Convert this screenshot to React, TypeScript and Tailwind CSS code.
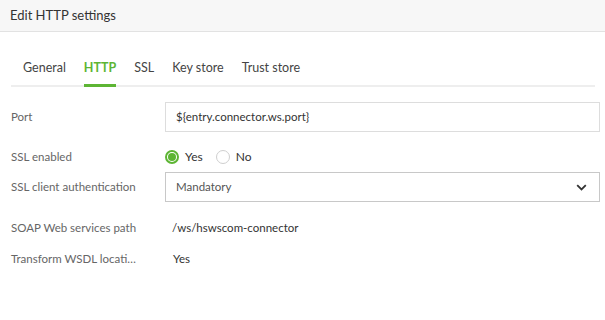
import React from 'react';

const font = { fontFamily: 'Lato, "Noto Sans", sans-serif' };

const tabs = ['General', 'HTTP', 'SSL', 'Key store', 'Trust store'];

const Radio = ({ checked, label }: { checked: boolean; label: string }) => (
  <label className="flex items-center gap-[6px]">
    <span
      className={
        checked
          ? 'w-[14px] h-[14px] rounded-full border-2 border-[#5db534] flex items-center justify-center'
          : 'w-[14px] h-[14px] rounded-full border border-[#cfcfcf] bg-white'
      }
    >
      {checked && <span className="w-[8px] h-[8px] rounded-full bg-[#5db534]" />}
    </span>
    <span className="text-[12px] text-[#333]">{label}</span>
  </label>
);

const App: React.FC = () => {
  return (
    <div className="w-[605px] h-[320px] bg-white overflow-hidden" style={font}>
      <div className="h-[32px] bg-[#f7f7f7] border-b border-[#e2e2e2] px-[10px] flex items-center">
        <h1 className="text-[13px] text-[#333] leading-none">Edit HTTP settings</h1>
      </div>

      <div className="pl-[11px] pr-[10px] pt-[27px]">
        <div className="flex gap-[18px] pl-[12px] border-b-2 border-[#eeeeee]">
          {tabs.map((t) => (
            <div
              key={t}
              className={
                t === 'HTTP'
                  ? 'pb-[7px] text-[12.5px] leading-[18px] font-bold text-[#5db534] border-b-[3px] border-[#5db534] -mb-[2px]'
                  : 'pb-[7px] text-[12.5px] leading-[18px] text-[#444] border-b-[3px] border-transparent -mb-[2px]'
              }
            >
              {t}
            </div>
          ))}
        </div>
      </div>

      <div className="pl-[11px] pr-[5px] pt-[15px] text-[11.5px]">
        <div className="flex items-center h-[30px]">
          <div className="w-[154px] text-[#666]">Port</div>
          <div className="flex-1 h-[30px] border border-[#dddddd] px-[10px] flex items-center text-[#333]">
            {'${entry.connector.ws.port}'}
          </div>
        </div>

        <div className="flex items-center h-[30px] mt-[10px]">
          <div className="w-[154px] text-[#666]">SSL enabled</div>
          <div className="flex items-center gap-[13px]">
            <Radio checked label="Yes" />
            <Radio checked={false} label="No" />
          </div>
        </div>

        <div className="flex items-center h-[30px]">
          <div className="w-[154px] text-[#666]">SSL client authentication</div>
          <div className="flex-1 h-[30px] border border-[#c8c8c8] px-[10px] flex items-center justify-between text-[#555]">
            <span>Mandatory</span>
            <svg width="11" height="7" viewBox="0 0 11 7" className="mr-[2px]">
              <path d="M1.2 1.2 L5.5 5.5 L9.8 1.2" fill="none" stroke="#333" strokeWidth="1.8" />
            </svg>
          </div>
        </div>

        <div className="flex items-center h-[30px] mt-[11px]">
          <div className="w-[161px] text-[#666]">SOAP Web services path</div>
          <div className="text-[#333]">/ws/hswscom-connector</div>
        </div>

        <div className="flex items-center h-[30px] mt-[1px]">
          <div className="w-[162px] text-[#666]" title="Transform WSDL location">
            Transform WSDL locati…
          </div>
          <div className="text-[#333]">Yes</div>
        </div>
      </div>
    </div>
  );
};

export default App;
